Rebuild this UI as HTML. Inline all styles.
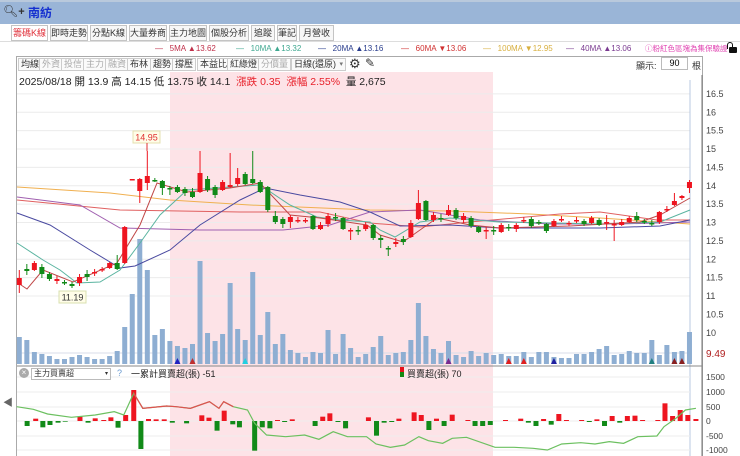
<!DOCTYPE html>
<html><head><meta charset="utf-8">
<style>
*{margin:0;padding:0;box-sizing:border-box}
body{width:740px;height:456px;overflow:hidden;background:#fff;font-family:"Liberation Sans","Noto Sans CJK TC",sans-serif;position:relative}
.top{position:absolute;left:0;top:0;width:740px;height:24px;background:#9ab5d7;border-top:2px solid #b9c9dc}
.tabs{position:absolute;top:25px;left:11px;height:16px;display:flex}
.tab{height:16px;border:1px solid #c4c4c4;background:#f7f7f7;font-size:9px;color:#333;line-height:14px;text-align:center;margin-right:2px;white-space:nowrap;overflow:hidden}
.abs{position:absolute;white-space:nowrap}
.tb{position:absolute;top:58px;height:13px;border:1px solid #ccc;background:#fafafa;font-size:9px;line-height:11px;padding:0 2px;color:#333}
.tb.g{color:#aaa}
.lg{position:absolute;top:44px;font-size:8px}
</style></head><body>
<div class="top"></div>
<div class="abs" style="left:3px;top:4px;font-size:12px;color:#333">🔍︎<b style="font-size:11px">+</b></div>
<div class="abs" style="left:28px;top:4px;font-size:12px;color:#1530d0;font-weight:bold">南紡</div>
<div class="tabs">
<div class="tab" style="width:37px;color:#e0303a;background:#fff">籌碼K線</div><div class="tab" style="width:38px">即時走勢</div><div class="tab" style="width:37px">分點K線</div><div class="tab" style="width:38px">大量券商</div><div class="tab" style="width:38px">主力地圖</div><div class="tab" style="width:40px">個股分析</div><div class="tab" style="width:24px">追蹤</div><div class="tab" style="width:20px">筆記</div><div class="tab" style="width:35px">月營收</div>
</div>
<div class="abs" style="left:0;top:41px;width:740px;border-top:1px solid #ddd"></div>
<div class="lg" style="left:155px;color:#c0304a">—&nbsp;&nbsp;&nbsp;5MA ▲13.62</div>
<div class="lg" style="left:236px;color:#3fa890">—&nbsp;&nbsp;&nbsp;10MA ▲13.32</div>
<div class="lg" style="left:318px;color:#283c8c">—&nbsp;&nbsp;&nbsp;20MA ▲13.16</div>
<div class="lg" style="left:401px;color:#d03030">—&nbsp;&nbsp;&nbsp;60MA ▼13.06</div>
<div class="lg" style="left:483px;color:#d8b040">—&nbsp;&nbsp;&nbsp;100MA ▼12.95</div>
<div class="lg" style="left:566px;color:#7a3a90">—&nbsp;&nbsp;&nbsp;40MA ▲13.06</div>
<div class="lg" style="left:645px;top:43px;color:#e040b0;font-size:7.5px">ⓘ粉紅色區塊為集保驗證</div>
<div class="abs" style="left:729px;top:47px;width:8px;height:6px;background:#111;border-radius:1px"></div>
<div class="abs" style="left:727px;top:42px;width:6px;height:7px;border:1.5px solid #111;border-bottom:none;border-radius:3px 3px 0 0"></div>

<svg class="abs" style="left:0;top:0" width="740" height="456" id="s"></svg>

<div class="tb" style="left:18px">均線</div><div class="tb g" style="left:39px">外資</div><div class="tb g" style="left:61px">投信</div><div class="tb g" style="left:83px">主力</div><div class="tb g" style="left:105px">融資</div><div class="tb" style="left:127px">布林</div><div class="tb" style="left:150px">趨勢</div><div class="tb" style="left:172px">撐壓</div><div class="tb" style="left:197px">本益比</div><div class="tb" style="left:227px">紅綠燈</div><div class="tb g" style="left:258px">分價量</div>
<div class="tb" style="left:291px;width:55px">日線(還原)<span style="float:right;font-size:7px;color:#777">▾</span></div>
<div class="abs" style="left:349px;top:56px;font-size:13px;color:#333">⚙</div>
<div class="abs" style="left:365px;top:56px;font-size:12px;color:#333">✎</div>
<div class="abs" style="left:636px;top:59px;font-size:9px;color:#333">顯示:</div>
<div class="abs" style="left:661px;top:57px;width:27px;height:13px;border:1px solid #bbb;font-size:9px;text-align:center;line-height:11px;background:#fff">90</div>
<div class="abs" style="left:692px;top:59px;font-size:9px;color:#333">根</div>
<div class="abs" style="left:19px;top:74px;font-size:10.5px;color:#222">2025/08/18 開 13.9 高 14.15 低 13.75 收 14.1 <span style="color:#e8202a">&nbsp;漲跌 0.35&nbsp; 漲幅 2.55%</span>&nbsp; 量 2,675</div>
<div class="abs" style="left:3px;top:394px;font-size:10px;color:#666">◀</div>
<div class="abs" style="left:19px;top:368px;width:10px;height:10px;border-radius:5px;background:#aaa;color:#fff;font-size:8px;line-height:10px;text-align:center">×</div>
<div class="abs" style="left:31px;top:368px;width:80px;height:12px;border:1px solid #bbb;font-size:8px;line-height:10px;padding-left:2px;color:#333;background:#fff">主力買賣超<span style="float:right;margin-right:2px;font-size:6px">▾</span></div>
<div class="abs" style="left:117px;top:368px;font-size:9px;color:#6a9ad0">?</div>
<div class="abs" style="left:131px;top:367px;font-size:9px;color:#222">一累計買賣超(張) -51</div>
<div class="abs" style="left:400px;top:367px;width:4px;height:5px;background:#e8101a"></div>
<div class="abs" style="left:400px;top:372px;width:4px;height:5px;background:#138a13"></div>
<div class="abs" style="left:407px;top:367px;font-size:9px;color:#222">買賣超(張) 70</div>

<script>
var s=document.getElementById('s'),h='';
function R(x,y,w,hh,c){h+='<rect x="'+x+'" y="'+y+'" width="'+w+'" height="'+hh+'" fill="'+c+'"/>';}
function L(x1,y1,x2,y2,c,w){h+='<line x1="'+x1+'" y1="'+y1+'" x2="'+x2+'" y2="'+y2+'" stroke="'+c+'" stroke-width="'+(w||1)+'"/>';}
function P(pts,c,w){h+='<polyline points="'+pts.map(function(p){return p.join(',')}).join(' ')+'" fill="none" stroke="'+c+'" stroke-width="'+(w||1)+'"/>';}
function T(x,y,t,c,sz,a){h+='<text x="'+x+'" y="'+y+'" fill="'+c+'" font-size="'+(sz||9)+'" font-family="Liberation Sans" '+(a?'text-anchor="'+a+'"':'')+'>'+t+'</text>';}
h+='<rect x="16.5" y="56.5" width="686" height="400" fill="none" stroke="#aaa"/>';
R(170,72,323,384,'#fde3e7');
for(var k=0;k<14;k++){var p=16.5-k*0.5,y=296-(p-11)*36.75;if(k<12)L(17,y,690,y,'#ececec');T(706,y+3,(p%1==0?p.toFixed(0):p.toFixed(1)),'#444',9);}
L(17,353,690,353,'#d8dde8');T(706,357,'9.49','#b02020',10);
L(702,75,702,456,'#777');L(690,80,690,456,'#b8c8e0');
L(17,366,702,366,'#888');
var vt=[337,340,352,354,356,359,359,357,355,357,359,359,356,351,327,294,239,270,335,329,341,346,348,344,261,333,341,334,283,329,340,272,335,312,344,334,350,353,357,352,353,330,354,334,348,357,354,347,336,355,353,352,340,303,336,349,353,341,355,357,351,356,353,355,354,356,356,352,357,352,352,357,358,358,354,354,352,349,346,355,354,351,353,353,340,355,345,352,351,332];
function X(i){return 19.3+7.53*i;}
vt.forEach(function(t,i){R(X(i)-2.5,t,5,364-t,'#8eaed2');});
[[21,'#2020c0'],[23,'#c03030'],[30,'#20d0e0'],[57,'#7a2a90'],[65,'#e02020'],[67,'#e02020'],[71,'#2020a0'],[84,'#208080'],[87,'#8a2020'],[88,'#8a2020']].forEach(function(a){h+='<polygon points="'+(X(a[0])-3)+',364 '+(X(a[0])+3)+',364 '+X(a[0])+',358" fill="'+a[1]+'"/>';});
var C=[['r',278,285,270,293],['g',269,271,264,275],['r',263,270,261,271],['g',267,274,264,278],['g',274,279,272,281],['r',279,281,276,284],['g',282,283,280,285],['g',284,286,282,288],['r',277,283,274,286],['g',274,277,270,281],['r',272,273,269,276],['r',269,270,267,272],['r',263,268,262,269],['g',263,269,255,270],['r',227,263,226,264],['r',179,180,179,180],['r',179,191,178,203],['r',176,183,151,190],['g',180,181,178,182],['g',181,188,180,195],['g',188,189,186,195],['g',187,192,185,193],['g',189,193,187,196],['g',192,197,188,198],['r',173,192,151,193],['g',179,190,176,192],['g',187,195,185,198],['r',182,190,180,191],['r',185,187,153,188],['r',178,184,168,186],['g',174,184,172,185],['g',179,183,151,184],['g',182,192,180,193],['g',187,210,186,212],['g',216,222,211,224],['g',219,224,217,228],['r',217,222,215,228],['r',220,221,217,223],['r',220,221,218,223],['g',216,229,215,230],['r',225,229,222,230],['r',216,224,213,227],['g',217,218,213,221],['g',218,229,217,230],['r',230,231,228,240],['g',230,231,226,235],['r',225,229,222,231],
['g',225,238,224,240],['g',238,240,235,248],['g',248,249,246,256],['r',242,244,238,247],['g',239,242,236,245],['r',223,237,220,238],['r',203,219,190,220],['g',201,220,200,221],['r',215,220,212,222],['g',218,219,214,222],['r',210,215,205,216],['g',210,218,208,220],['r',216,220,213,223],['g',218,226,216,228],['g',227,232,226,233],['r',230,231,227,239],['g',230,231,226,235],['r',225,232,223,233],['g',227,228,224,231],['r',225,229,223,232],['r',220,221,217,223],['g',219,226,217,228],['g',222,223,220,225],['g',224,231,223,233],['r',221,226,219,227],['r',219,220,216,222],['r',223,224,221,226],['r',220,221,217,223],['g',221,224,219,226],['r',218,223,216,224],['g',220,225,218,226],['r',222,223,215,230],['r',224,225,220,241],['r',222,225,219,226],['r',218,222,216,223],['g',216,220,212,222],['g',221,222,219,224],['g',223,224,220,226],['r',212,222,211,224],['r',209,210,206,212],['r',201,205,193,206],['r',196,198,195,200],['r',182,188,180,193]];
P([[17,187],[110,193],[170,200],[250,205],[370,210],[450,211],[530,214],[600,218],[690,224]],'#f0b050');
P([[17,200],[120,210],[240,212],[320,212],[370,223],[420,227],[470,222],[560,214],[600,212],[657,220],[690,220]],'#e06060');
P([[17,197],[80,205],[120,228],[200,230],[283,230],[330,225],[370,212],[420,210],[480,220],[550,224],[620,224],[690,222]],'#a060b0');
P([[17,213],[50,225],[90,250],[120,268],[135,266],[170,250],[200,225],[240,200],[265,188],[300,195],[340,202],[370,212],[400,226],[450,225],[500,228],[600,228],[660,226],[690,220]],'#4a4aa0');
P([[17,243],[43,260],[60,270],[77,283],[100,282],[120,270],[140,243],[160,215],[187,190],[230,187],[260,185],[290,205],[317,217],[340,220],[370,222],[380,230],[395,237],[420,222],[450,218],[500,222],[600,224],[660,222],[690,210]],'#5ab4a0');
P([[18,283],[27,289],[43,270],[73,282],[117,263],[140,225],[157,183],[187,192],[230,188],[260,183],[290,215],[320,218],[367,225],[380,235],[403,242],[420,230],[437,218],[470,225],[500,228],[570,226],[640,222],[660,215],[690,198]],'#c04848');
C.forEach(function(c,i){var x=X(i),col=c[0]=='r'?'#ee1520':'#118a18';L(x,c[3],x,c[4],col);R(x-2.5,c[1],5,Math.max(1.5,c[2]-c[1]),col);});
h+='<rect x="133" y="131" width="27" height="12" fill="#fffde8" stroke="#e4e0b0"/>';T(146.5,140.5,'14.95','#e03030',9,'middle');L(147,143,147,151,'#e03030');
h+='<rect x="59" y="291" width="27" height="12" fill="#fffde8" stroke="#d8e0b0"/>';T(72.5,300.5,'11.19','#333',9,'middle');
[[1500,377],[1000,392],[500,407],[0,421],[-500,436],[-1000,450]].forEach(function(a){L(17,a[1],690,a[1],'#eeeeee');T(706,a[1]+3,a[0],'#444',8.5);});
var B=[[57,258],[75,236],[90,262],[105,255],[122,248],[137,245],[168,230],[185,248],[200,235],[218,240],[233,232],[248,263],[264,225],[281,150],[296,327],[312,237],[328,238],[345,238],[362,248],[392,250],[424,226],[439,233],[456,272],[471,212],[489,253],[503,262],[535,332],[551,262],[567,265],[583,240],[598,246],[614,238],[662,258],[678,230],[693,220],[710,246],[726,265],[774,232],[791,287],[807,248],[823,246],[838,236],[870,217],[885,225],[901,270],[917,236],[933,258],[950,224],[983,240],[998,258],[1014,258],[1030,255],[1062,240],[1094,236],[1110,248],[1126,258],[1142,237],[1158,254],[1174,222],[1190,240],[1222,240],[1238,246],[1254,238],[1270,258],[1286,228],[1302,248],[1318,228],[1334,227],[1350,240],[1382,240],[1397,190],[1413,228],[1429,210],[1445,225],[1462,237]];
B.forEach(function(b){var x=b[0]*0.476,y=340+b[1]/3,z=421;if(y<z)R(x-2.5,y,5,z-y,'#ee1520');else R(x-2.5,z,5,y-z,'#118a18');});
var G=[[35,200],[70,208],[100,222],[150,232],[200,225],[240,215],[260,225],[281,160],[300,205],[350,198],[370,200],[400,205],[440,185],[460,205],[470,185],[490,200],[520,210],[535,250],[560,285],[600,290],[640,285],[670,298],[700,275],[730,290],[770,290],[790,312],[820,322],[850,315],[880,290],[900,302],[930,310],[950,295],[980,292],[1040,322],[1080,322],[1120,325],[1150,330],[1180,312],[1220,308],[1250,312],[1280,305],[1310,310],[1340,290],[1380,288],[1395,260],[1420,235],[1440,210],[1462,205]].map(function(p){return [p[0]*0.476,340+p[1]/3];});
P(G,'#6cc060',1.2);
P(G.slice(7,16),'#e05050',1.2);
s.innerHTML=h;
</script>
</body></html>
